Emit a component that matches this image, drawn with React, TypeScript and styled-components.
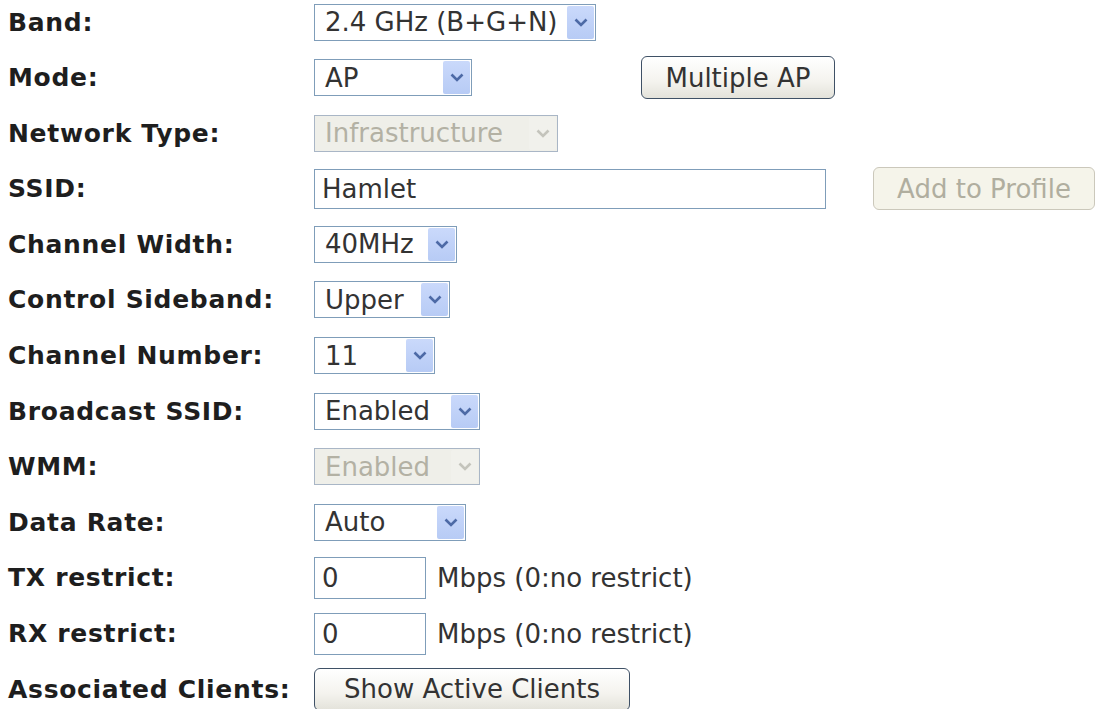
import React from "react";
import styled, { createGlobalStyle } from "styled-components";

const GlobalStyle = createGlobalStyle`
  html, body {
    margin: 0;
    padding: 0;
    background: #ffffff;
  }
  body {
    font-family: "DejaVu Sans", Verdana, sans-serif;
  }
`;

const Form = styled.div`
  display: grid;
  grid-auto-rows: 44px;
  row-gap: 11.6px;
  padding-left: 8px;
`;

const Row = styled.div`
  display: grid;
  grid-template-columns: 306px 1fr;
  align-items: center;
`;

const Label = styled.div`
  font-weight: bold;
  font-size: 25px;
  letter-spacing: 0.7px;
  color: #1e1e1e;
  white-space: nowrap;
`;

const Cell = styled.div`
  display: flex;
  align-items: center;
`;

const SelectBox = styled.div<{ $width: number; $disabled?: boolean }>`
  box-sizing: border-box;
  width: ${(p) => p.$width}px;
  height: 37px;
  display: flex;
  align-items: stretch;
  border: 1px solid ${(p) => (p.$disabled ? "#a9b6c6" : "#7f9db9")};
  background: ${(p) => (p.$disabled ? "#efefe9" : "#ffffff")};
  color: ${(p) => (p.$disabled ? "#b3b1a4" : "#333333")};
  font-size: 26px;
`;

const SelectValue = styled.span`
  flex: 1;
  display: flex;
  align-items: center;
  padding-left: 10px;
  white-space: nowrap;
  overflow: hidden;
`;

const ArrowBox = styled.span<{ $disabled?: boolean }>`
  width: 27px;
  margin: 1px;
  display: flex;
  align-items: center;
  justify-content: center;
  border-radius: 2px;
  background: ${(p) =>
    p.$disabled
      ? "#f1f1ec"
      : "linear-gradient(180deg, #cad9fb 0%, #b7cbf5 100%)"};
  color: ${(p) => (p.$disabled ? "#c4c4bc" : "#4d6aa6")};
`;

const TextBox = styled.div<{ $width: number; $height: number }>`
  box-sizing: border-box;
  width: ${(p) => p.$width}px;
  height: ${(p) => p.$height}px;
  display: flex;
  align-items: center;
  padding-left: 7px;
  border: 1px solid #7f9db9;
  background: #ffffff;
  font-size: 26px;
  color: #333333;
`;

const Button = styled.div<{ $width: number; $gap?: number; $disabled?: boolean }>`
  box-sizing: border-box;
  width: ${(p) => p.$width}px;
  height: 43px;
  margin-left: ${(p) => p.$gap ?? 0}px;
  display: flex;
  align-items: center;
  justify-content: center;
  border: 1px solid ${(p) => (p.$disabled ? "#cbc8bb" : "#3f5166")};
  border-radius: 6px;
  background: ${(p) =>
    p.$disabled
      ? "#f5f4ea"
      : "linear-gradient(180deg, #ffffff 0%, #f4f3ee 60%, #e3e2da 100%)"};
  color: ${(p) => (p.$disabled ? "#b0ae9f" : "#333333")};
  font-size: 26px;
  white-space: nowrap;
`;

const Note = styled.span`
  margin-left: 11px;
  font-size: 26px;
  color: #333333;
  white-space: nowrap;
`;

const Chevron: React.FC = () => (
  <svg width="14" height="9" viewBox="0 0 14 9">
    <path d="M1.5 1.5 L7 7 L12.5 1.5" fill="none" stroke="currentColor" strokeWidth="2.6" />
  </svg>
);

const Select: React.FC<{ value: string; width: number; disabled?: boolean }> = ({ value, width, disabled }) => (
  <SelectBox $width={width} $disabled={disabled}>
    <SelectValue>{value}</SelectValue>
    <ArrowBox $disabled={disabled}>
      <Chevron />
    </ArrowBox>
  </SelectBox>
);

export default function App() {
  return (
    <>
      <GlobalStyle />
      <Form>
        <Row>
          <Label>Band:</Label>
          <Cell>
            <Select value="2.4 GHz (B+G+N)" width={282} />
          </Cell>
        </Row>
        <Row>
          <Label>Mode:</Label>
          <Cell>
            <Select value="AP" width={158} />
            <Button $width={194} $gap={169}>Multiple AP</Button>
          </Cell>
        </Row>
        <Row>
          <Label>Network Type:</Label>
          <Cell>
            <Select value="Infrastructure" width={244} disabled />
          </Cell>
        </Row>
        <Row>
          <Label>SSID:</Label>
          <Cell>
            <TextBox $width={512} $height={40}>Hamlet</TextBox>
            <Button $width={222} $gap={47} $disabled>Add to Profile</Button>
          </Cell>
        </Row>
        <Row>
          <Label>Channel Width:</Label>
          <Cell>
            <Select value="40MHz" width={143} />
          </Cell>
        </Row>
        <Row>
          <Label>Control Sideband:</Label>
          <Cell>
            <Select value="Upper" width={136} />
          </Cell>
        </Row>
        <Row>
          <Label>Channel Number:</Label>
          <Cell>
            <Select value="11" width={121} />
          </Cell>
        </Row>
        <Row>
          <Label>Broadcast SSID:</Label>
          <Cell>
            <Select value="Enabled" width={166} />
          </Cell>
        </Row>
        <Row>
          <Label>WMM:</Label>
          <Cell>
            <Select value="Enabled" width={166} disabled />
          </Cell>
        </Row>
        <Row>
          <Label>Data Rate:</Label>
          <Cell>
            <Select value="Auto" width={152} />
          </Cell>
        </Row>
        <Row>
          <Label>TX restrict:</Label>
          <Cell>
            <TextBox $width={112} $height={42}>0</TextBox>
            <Note>Mbps (0:no restrict)</Note>
          </Cell>
        </Row>
        <Row>
          <Label>RX restrict:</Label>
          <Cell>
            <TextBox $width={112} $height={42}>0</TextBox>
            <Note>Mbps (0:no restrict)</Note>
          </Cell>
        </Row>
        <Row>
          <Label>Associated Clients:</Label>
          <Cell>
            <Button $width={316}>Show Active Clients</Button>
          </Cell>
        </Row>
      </Form>
    </>
  );
}
